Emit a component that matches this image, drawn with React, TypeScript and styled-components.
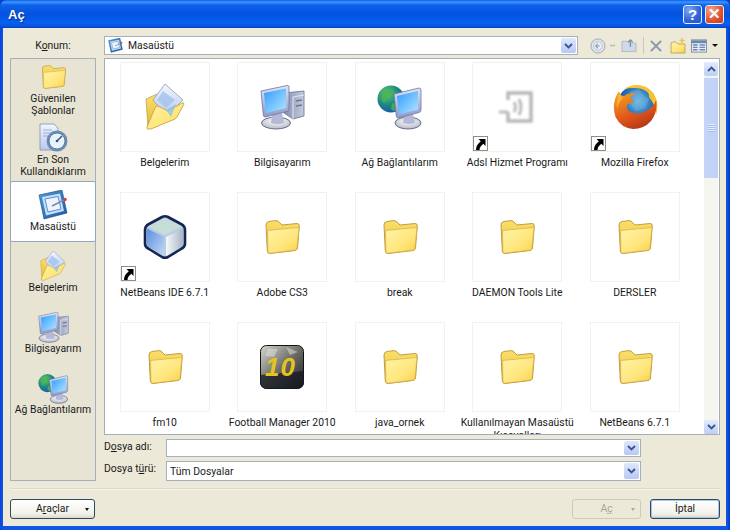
import React from "react";
import styled, { createGlobalStyle } from "styled-components";

const Global = createGlobalStyle`
  html, body { margin: 0; padding: 0; background: #0a3fd0; }
  * { box-sizing: border-box; }
  u { text-underline-offset: 1px; }
`;
const FONT = `Roboto, "Liberation Sans", Arial, sans-serif`;
const TITLE_FONT = `"Liberation Sans", Arial, sans-serif`;

const Window = styled.div`
  width: 730px; height: 530px; display: flex; flex-direction: column; overflow: hidden;
  padding: 0 4px 4px 3px; font: 10.4px/13px ${FONT}; color: #1a1a1a;
  background: linear-gradient(90deg, #0a45d8 0, #0f55e8 3px, #0f55e8 727px, #0636b8 730px);
  border-radius: 7px 7px 0 0;
`;
const TitleBar = styled.div`
  height: 28px; flex: none; margin: 0 -4px 0 -3px; padding: 0 6px 0 8px;
  display: flex; align-items: center; justify-content: space-between;
  background: linear-gradient(180deg, #0a5fe8 0, #3f95ff 2px, #0f62ea 5px, #0452e0 14px, #0560ee 23px, #0a55e0 26px, #0440c0 28px);
`;
const Title = styled.div`
  font: bold 13px ${TITLE_FONT}; color: #fff; text-shadow: 1px 1px 1px #0a2a90;
`;
const TitleButtons = styled.div` display: flex; gap: 3px; `;
const CapButton = styled.div<{ $close?: boolean }>`
  width: 19px; height: 19px; border: 1px solid #e8eefc; border-radius: 3px; display: flex;
  align-items: center; justify-content: center; color: #fff;
  font: bold 15px ${TITLE_FONT};
  background: ${(p) => p.$close
    ? "radial-gradient(circle at 30% 25%, #f4a58c, #e0512c 60%, #c8361a)"
    : "radial-gradient(circle at 30% 25%, #7fa8f5, #2f62d8 60%, #2a55c8)"};
`;
const Body = styled.div`
  flex: 1; min-height: 0; background: #ece9d8; padding: 8px 6px 0 7px;
  display: flex; flex-direction: column;
`;
const LocationRow = styled.div` height: 19px; display: flex; align-items: center; flex: none; `;
const LocationLabel = styled.div` width: 94px; flex: none; padding-right: 8px; text-align: center; `;
const Combo = styled.div<{ $w: number; $h: number }>`
  width: ${(p) => p.$w}px; height: ${(p) => p.$h}px; flex: none; background: #fff;
  border: 1px solid #a3b0bd; display: flex; align-items: center; padding: 0 1px 0 2px;
`;
const ComboText = styled.div` flex: 1; padding-left: 1px; display: flex; align-items: center; gap: 5px; `;
const DropButton = styled.div`
  width: 15px; height: calc(100% - 2px); border-radius: 2px; display: flex; align-items: center; justify-content: center;
  background: linear-gradient(180deg, #dfe8fc, #b5c9f4);
`;
const Tools = styled.div` display: flex; align-items: center; margin-left: 12px; height: 19px; flex: none; `;
const Tool = styled.span<{ $ml?: number }>` display: flex; flex: none; margin-left: ${(p) => p.$ml ?? 0}px; `;
const ToolSep = styled.div` width: 1px; height: 17px; flex: none; background: #c8c8ba; margin-left: 6px; `;
const Content = styled.div` flex: none; height: 423px; margin-top: 3px; display: flex; gap: 8px; `;
const Sidebar = styled.div`
  width: 86px; flex: none; border: 1px solid #a5b0ba; background: #e8e4d4; display: flex; flex-direction: column;
`;
const Place = styled.div<{ $active?: boolean }>`
  height: 61px; flex: none; display: flex; flex-direction: column; align-items: center; justify-content: center;
  text-align: center; line-height: 12px; white-space: pre-line; gap: 1px;
  ${(p) => p.$active && "background: #fff; border: 1px solid #8fa7bf; border-radius: 2px; margin: 0 -1px;"}
`;
const PlaceIcon = styled.div` height: 30px; flex: none; display: flex; align-items: center; justify-content: center; `;
const Main = styled.div` flex: 1; min-width: 0; display: flex; flex-direction: column; `;
const FileList = styled.div`
  height: 377px; flex: none; background: #fff; border: 1px solid #a3aeb8; display: flex; overflow: hidden;
`;
const Grid = styled.div`
  flex: 1; min-width: 0; height: 100%; overflow: hidden; padding: 3px 0 0 1px; display: grid;
  grid-template-columns: repeat(5, 117.5px); grid-auto-rows: 130px; align-content: start;
`;
const Cell = styled.div` display: flex; flex-direction: column; align-items: center; `;
const Thumb = styled.div`
  width: 90px; height: 90px; flex: none; position: relative; border: 1px solid #f3f1e8;
  display: flex; align-items: center; justify-content: center; margin-bottom: 3px;
`;
const Name = styled.div` width: 116px; text-align: center; line-height: 13px; padding-top: 1px; `;
const Badge = styled.div`
  position: absolute; left: 0; bottom: 0; width: 15px; height: 15px; background: #fff;
  border: 1px solid #8d8d8d; display: flex; align-items: center; justify-content: center;
`;
const ScrollBar = styled.div`
  width: 14px; flex: none; margin: 3px 1px 0 0; display: flex; flex-direction: column; background: #f6f6f0;
`;
const ScrollBtn = styled.div`
  height: 14px; flex: none; background: linear-gradient(180deg, #e2ebfd, #bcd0f6); border-radius: 2px;
  display: flex; align-items: center; justify-content: center;
`;
const ScrollThumb = styled.div`
  height: 101px; flex: none; margin-top: 1px; background: linear-gradient(90deg, #c6d6f8, #bed0f6);
  border-top: 1px solid #eef3fd; display: flex; align-items: center; justify-content: center;
`;
const Grip = styled.div` width: 7px; height: 8px; background: repeating-linear-gradient(180deg, #e6edfc 0 1px, #a9bdea 1px 2px); `;
const ScrollTrack = styled.div` flex: 1; `;
const FormRow = styled.div<{ $mt: number }>` display: flex; align-items: center; margin-top: ${(p) => p.$mt}px; flex: none; `;
const FormLabel = styled.div<{ $up: number }>` width: 62px; flex: none; margin-bottom: ${(p) => p.$up * 2}px; `;
const Separator = styled.div` height: 2px; flex: none; margin: 7px -1px 0 0; border-top: 1px solid #dcd9c8; border-bottom: 1px solid #f6f4ea; `;
const ButtonRow = styled.div` flex: none; display: flex; align-items: center; margin-top: 9px; gap: 9px; `;
const Btn = styled.div<{ $w: number; $disabled?: boolean; $focus?: boolean }>`
  width: ${(p) => p.$w}px; height: 20px; border-radius: 3px; flex: none; display: flex; align-items: center; justify-content: center;
  position: relative; padding-bottom: 1px;
  border: 1px solid ${(p) => (p.$disabled ? "#cdcabb" : "#2d4a64")};
  color: ${(p) => (p.$disabled ? "#aaa899" : "#1a1a1a")};
  background: ${(p) => (p.$disabled ? "#ece9d8" : "linear-gradient(180deg, #fff, #f3f2ea 75%, #dcd8cb)")};
  ${(p) => p.$focus && "box-shadow: inset 0 0 0 1px #a9c4ec;"}
`;
const Caret = styled.span<{ $c: string }>`
  position: absolute; right: 5px; top: 8px; width: 0; height: 0; border: 2.5px solid transparent; border-top: 3px solid ${(p) => p.$c}; border-bottom: 0;
`;
const Spacer = styled.div` flex: 1; `;
const HiddenDefs = styled.svg` position: absolute; width: 0; height: 0; `;
const Blurred = styled.svg` filter: blur(0.8px); `;

const Defs = () => (
  <HiddenDefs aria-hidden="true">
    <defs>
      <linearGradient id="fy" x1="0" y1="0" x2="1" y2="1"><stop offset="0" stopColor="#fff4a8" /><stop offset="0.6" stopColor="#ffe67c" /><stop offset="1" stopColor="#f8d04c" /></linearGradient>
      <linearGradient id="fb" x1="0" y1="0" x2="0" y2="1"><stop offset="0" stopColor="#fbe06a" /><stop offset="1" stopColor="#e6b83a" /></linearGradient>
      <linearGradient id="sc" x1="0" y1="0" x2="1" y2="1"><stop offset="0" stopColor="#2f9bff" /><stop offset="1" stopColor="#b5e6ff" /></linearGradient>
      <linearGradient id="fr" x1="0" y1="0" x2="0" y2="1"><stop offset="0" stopColor="#dde3f6" /><stop offset="1" stopColor="#8e9ac8" /></linearGradient>
      <linearGradient id="tw" x1="0" y1="0" x2="1" y2="0"><stop offset="0" stopColor="#8490b0" /><stop offset="1" stopColor="#c4cbe0" /></linearGradient>
      <radialGradient id="bs" cx="0.5" cy="0.35" r="0.7"><stop offset="0" stopColor="#ffffff" /><stop offset="1" stopColor="#b0b4c4" /></radialGradient>
      <radialGradient id="gl" cx="0.35" cy="0.3" r="0.8"><stop offset="0" stopColor="#5fd069" /><stop offset="0.5" stopColor="#1f8a80" /><stop offset="1" stopColor="#1550b0" /></radialGradient>
      <radialGradient id="ffb" cx="0.55" cy="0.4" r="0.6"><stop offset="0" stopColor="#7cc4e8" /><stop offset="0.7" stopColor="#1e6ab0" /><stop offset="1" stopColor="#123f86" /></radialGradient>
      <linearGradient id="ffo" x1="0.2" y1="0" x2="0.7" y2="1"><stop offset="0" stopColor="#f6a020" /><stop offset="0.6" stopColor="#e0551a" /><stop offset="1" stopColor="#b03418" /></linearGradient>
      <linearGradient id="nl" x1="0" y1="0" x2="1" y2="1"><stop offset="0" stopColor="#5b8fe0" /><stop offset="1" stopColor="#c4d8f4" /></linearGradient>
      <linearGradient id="nr" x1="0" y1="0" x2="1" y2="0"><stop offset="0" stopColor="#f6f9fb" /><stop offset="1" stopColor="#a8b4c4" /></linearGradient>
      <linearGradient id="fm" x1="0" y1="0" x2="1" y2="1"><stop offset="0" stopColor="#d8d8d0" /><stop offset="0.5" stopColor="#6c6c68" /><stop offset="1" stopColor="#1c1c1c" /></linearGradient>
      <linearGradient id="dk" x1="0" y1="0" x2="1" y2="1"><stop offset="0" stopColor="#4a9ad8" /><stop offset="1" stopColor="#1a5aa0" /></linearGradient>
      <linearGradient id="dc" x1="0" y1="0" x2="0" y2="1"><stop offset="0" stopColor="#f2f6fe" /><stop offset="1" stopColor="#b8c8ee" /></linearGradient>
    </defs>
  </HiddenDefs>
);

const Folder = ({ w = 36, h = 34 }: { w?: number; h?: number }) => (
  <svg width={w} height={h} viewBox="0 0 36 34">
    <path d="M2 5Q2 2 5 1.500L12 .6Q14 .5 16 3L18 5L33 3.500Q35.500 3.500 35.300 6L33.500 28Q33.300 30 31 30.500L6 33.500Q3.500 33.500 3.300 31Z" fill="url(#fb)" stroke="#b8943a" strokeWidth=".9" />
    <path d="M3.600 10.500L33.800 7.500Q35 7.500 34.800 9L33 28.500Q32.900 29.800 31 30.200L6 33.200Q4 33.200 3.900 31.500Z" fill="url(#fy)" stroke="#d0a640" strokeWidth=".6" />
  </svg>
);
const DocFolder = ({ s = 40 }: { s?: number }) => (
  <svg width={s} height={s * 1.15} viewBox="0 0 40 46">
    <path d="M1 15L12 10L15 12L15 32L3 44Z" fill="url(#fb)" stroke="#b8983e" strokeWidth=".7" />
    <path d="M20 0L38 16L22 32L8 16Z" fill="url(#dc)" stroke="#8a9cc0" strokeWidth=".8" />
    <path d="M18 7L30 16L21 24L12 16Z" fill="#9fc0ee" opacity=".75" />
    <path d="M3 45Q1.500 45 2 43L10 24Q11 22 13 22L23 27L37 19Q39.500 18 38.800 20.500L32 33Q31 34.500 30 35L6 45Z" fill="url(#fy)" stroke="#c09a3e" strokeWidth=".8" />
    <path d="M21 26L31 20L26 33Z" fill="#8fc0e8" opacity=".8" />
  </svg>
);
const Computer = ({ s = 45 }: { s?: number }) => (
  <svg width={s} height={s} viewBox="0 0 45 45">
    <path d="M24 8L44 6L44 31L33 34L24 28Z" fill="url(#tw)" stroke="#66708c" strokeWidth=".8" />
    <path d="M33 12L44 10M33 12L33 34" stroke="#e3e7f2" strokeWidth="1" fill="none" />
    <path d="M36 16L42 15M36 21L42 20" stroke="#6a7696" strokeWidth="1.500" />
    <ellipse cx="16" cy="38" rx="14.500" ry="6" fill="url(#bs)" stroke="#59627c" strokeWidth=".9" />
    <path d="M12 30L22 28L24 38Q17 40 11 38Z" fill="#b5b8d6" />
    <path d="M1 6L27 0.500Q29 .3 29 2L29 24Q29 26 27 26.500L5 32Q3.500 32 3.300 30Z" fill="url(#fr)" stroke="#6c76a0" strokeWidth=".8" />
    <path d="M4 8L26 3.500L26 23L6 28Z" fill="url(#sc)" />
  </svg>
);
const Network = ({ s = 46 }: { s?: number }) => (
  <svg width={s} height={s} viewBox="0 0 46 46">
    <circle cx="14" cy="15" r="13.500" fill="url(#gl)" />
    <path d="M6 8Q12 4 17 8Q15 13 10 12Q10 18 7 19Q3 15 6 8ZM15 19Q21 19 20 25Q17 29 14 25Z" fill="#4fb04f" opacity=".8" />
    <ellipse cx="31" cy="39" rx="13" ry="6" fill="url(#bs)" stroke="#59627c" strokeWidth=".9" />
    <path d="M27 32L36 30L38 39Q32 41 26 39Z" fill="#b5b8d6" />
    <path d="M17 10L42 4Q44 4 44 6L44 26Q44 28 42 28.500L21 34Q19.500 34 19.300 32Z" fill="url(#fr)" stroke="#6c76a0" strokeWidth=".8" />
    <path d="M20 12L41 7L41 25.500L22 30.500Z" fill="url(#sc)" />
  </svg>
);
const Adsl = () => (
  <Blurred width="38" height="38" viewBox="0 0 38 38">
    <path d="M10 12V5H33V33H10V24" fill="none" stroke="#b8b8b8" strokeWidth="3.500" />
    <path d="M1 24H10M16 14Q19 19 16 24M21 11Q25 19 21 27" fill="none" stroke="#bcbcbc" strokeWidth="3" />
  </Blurred>
);
const Firefox = () => (
  <svg width="46" height="46" viewBox="0 0 46 46">
    <circle cx="24" cy="21" r="19" fill="url(#ffb)" />
    <path d="M18 8L27 5L32 12L37 15L33 24L24 27L16 17Z" fill="#6ab0de" opacity=".5" />
    <path d="M12 5Q23 -2 34 3Q42 7 45 17Q46 25 44 31Q43 20 37 13Q38 8 30 5Q22 3 12 5Z" fill="#f6c232" />
    <path d="M7 7Q8 12 12 12Q17 8 25 10Q19 11 18 14Q23 16 21 19Q17 18 15 21Q14 27 21 29Q29 31 36 26Q42 22 44 16Q46 28 39 37Q32 45 21 45Q9 44 3.500 33Q-1 19 7 7Z" fill="url(#ffo)" />
    <path d="M7 9Q4 17 5 25Q7 17 11 14Z" fill="#f8c040" opacity=".7" />
  </svg>
);
const NetBeans = () => (
  <svg width="44" height="46" viewBox="0 0 44 46">
    <path d="M19 3Q22 1.500 25 3L38 10Q42 12 42 16V30Q42 33 38 35L25 43Q22 44.500 19 43L6 35Q2 33 2 30V16Q2 12 6 10Z" fill="#b8cde2" stroke="#172552" strokeWidth="2.600" strokeLinejoin="round" />
    <path d="M22 4L39 12.500L22 21L5 12.500Z" fill="#c6dcd6" />
    <path d="M4 14.500L21 23V42L6 33Q4 32 4 30Z" fill="url(#nl)" />
    <path d="M23 23L40 14.500V30Q40 32 38 33L23 42Z" fill="url(#nr)" />
  </svg>
);
const FmNumber = styled.text` font: italic bold 26px ${TITLE_FONT}; fill: #e6c41e; letter-spacing: 1px; `;
const Fm10 = () => (
  <svg width="44" height="44" viewBox="0 0 44 44">
    <rect width="43" height="43" x=".5" y=".5" rx="6" fill="url(#fm)" stroke="#111" />
    <path d="M0 30L44 26V37Q44 44 36 44H8Q0 44 0 37Z" fill="#151a22" opacity=".75" />
    <path d="M8 4L18 4L14 12L5 11ZM26 2L38 7L30 10Z" fill="#e4e4dc" opacity=".5" />
    <FmNumber x="5" y="31">10</FmNumber>
  </svg>
);
const Desktop = ({ s = 30 }: { s?: number }) => (
  <svg width={s} height={s} viewBox="0 0 30 30">
    <path d="M1 5L24 0L29 23L6 29Z" fill="url(#dk)" stroke="#1a4a88" strokeWidth=".6" />
    <path d="M4 7L22 3.500L26 21L8 25.500Z" fill="#c8dcf8" />
    <path d="M7 9L20 6.500L23 19L10 22Z" fill="#eef4fe" stroke="#3a78c0" strokeWidth=".8" />
    <path d="M14 16L26 10" stroke="#7d8ca8" strokeWidth="1.600" />
    <circle cx="27" cy="9.500" r="1.800" fill="#d84040" />
  </svg>
);
const Recent = () => (
  <svg width="30" height="30" viewBox="0 0 30 30">
    <path d="M2 1H16L20 5V27H2Z" fill="url(#dc)" stroke="#8090b0" strokeWidth=".8" />
    <path d="M5 7H14M5 10H14M5 13H10" stroke="#9ab0d8" strokeWidth="1" />
    <circle cx="19" cy="18" r="10.500" fill="#6f8db0" />
    <circle cx="19" cy="18" r="8" fill="#e8f2fa" stroke="#3f6a98" strokeWidth=".8" />
    <path d="M19 18L24 13" stroke="#34507a" strokeWidth="1.500" />
    <circle cx="19" cy="18" r="1.300" fill="#34507a" />
  </svg>
);
const Shortcut = () => (
  <svg width="11" height="12" viewBox="0 0 11 12">
    <path d="M10.500 1V8L8.300 5.800L6 8Q4.500 9.500 4.500 12H1Q1 7.500 4 5L5.800 3.300L3.500 1Z" fill="#000" />
  </svg>
);
const Chevron = ({ d = "down" }: { d?: "down" | "up" }) => (
  <svg width="9" height="6" viewBox="0 0 9 6">
    <path d={d === "down" ? "M1 1L4.500 4.500L8 1" : "M1 5L4.500 1.500L8 5"} fill="none" stroke="#3c5590" strokeWidth="1.900" />
  </svg>
);
const ToolBack = () => (
  <svg width="16" height="16" viewBox="0 0 17 17">
    <circle cx="8.500" cy="8.500" r="7.500" fill="#dfe3ea" stroke="#9aa8bc" />
    <circle cx="8.500" cy="8.500" r="4.500" fill="#eef1f5" stroke="#b8c2d0" />
    <path d="M10.500 8.500H6.500M8.500 6L6 8.500L8.500 11" fill="none" stroke="#8a9ab0" strokeWidth="1.200" />
  </svg>
);
const ToolDash = () => <svg width="5" height="3" viewBox="0 0 5 3"><path d="M0 1.500H5" stroke="#b8bcc4" strokeWidth="1.500" /></svg>;
const ToolUp = () => (
  <svg width="16" height="15" viewBox="0 0 17 15">
    <path d="M1 3H7L9 5H16V14H1Z" fill="#cfdae6" stroke="#a4b2c2" strokeWidth=".8" />
    <path d="M10 9V2M7.500 4L10 1.500L12.500 4" stroke="#7e92a8" fill="none" strokeWidth="1.400" />
  </svg>
);
const ToolX = () => <svg width="14" height="14" viewBox="0 0 15 15"><path d="M2 2L13 13M13 2L2 13" stroke="#8b98a8" strokeWidth="2.200" /></svg>;
const ToolNew = () => (
  <svg width="16" height="16" viewBox="0 0 16 16">
    <path d="M1 6Q1 4 3 4H6L8 6H15V15H1Z" fill="url(#fy)" stroke="#a8904a" strokeWidth=".7" />
    <path d="M12 0V5M9.500 2.500H14.500" stroke="#e8c838" strokeWidth="1.400" />
  </svg>
);
const ToolViews = () => (
  <svg width="16" height="14" viewBox="0 0 17 14">
    <rect x=".5" y=".5" width="16" height="13" fill="#e8eef8" stroke="#7a8fae" />
    <rect x="1" y="1" width="15" height="3" fill="#6d86ae" />
    <path d="M2 6H7M2 8.500H7M2 11H7M9 6H15M9 8.500H15M9 11H15" stroke="#7088ae" strokeWidth="1.500" />
  </svg>
);
const ToolCaret = styled.span` width: 0; height: 0; flex: none; margin-left: 5px; border: 3px solid transparent; border-top: 3px solid #111; border-bottom: 0; `;

const FILES: { name: string; icon: React.ReactNode; link?: boolean }[] = [
  { name: "Belgelerim", icon: <DocFolder /> },
  { name: "Bilgisayarım", icon: <Computer /> },
  { name: "Ağ Bağlantılarım", icon: <Network /> },
  { name: "Adsl Hizmet Programı", icon: <Adsl />, link: true },
  { name: "Mozilla Firefox", icon: <Firefox />, link: true },
  { name: "NetBeans IDE 6.7.1", icon: <NetBeans />, link: true },
  { name: "Adobe CS3", icon: <Folder /> },
  { name: "break", icon: <Folder /> },
  { name: "DAEMON Tools Lite", icon: <Folder /> },
  { name: "DERSLER", icon: <Folder /> },
  { name: "fm10", icon: <Folder /> },
  { name: "Football Manager 2010", icon: <Fm10 /> },
  { name: "java_ornek", icon: <Folder /> },
  { name: "Kullanılmayan Masaüstü Kısayolları", icon: <Folder /> },
  { name: "NetBeans 6.7.1", icon: <Folder /> },
];
const PLACES: { name: string; icon: React.ReactNode; active?: boolean }[] = [
  { name: "Güvenilen\nŞablonlar", icon: <Folder w={25} h={24} /> },
  { name: "En Son\nKullandıklarım", icon: <Recent /> },
  { name: "Masaüstü", icon: <Desktop />, active: true },
  { name: "Belgelerim", icon: <DocFolder s={26} /> },
  { name: "Bilgisayarım", icon: <Computer s={31} /> },
  { name: "Ağ Bağlantılarım", icon: <Network s={31} /> },
];

export default function App() {
  return (
    <Window>
      <Global />
      <Defs />
      <TitleBar>
        <Title>Aç</Title>
        <TitleButtons>
          <CapButton>?</CapButton>
          <CapButton $close>✕</CapButton>
        </TitleButtons>
      </TitleBar>
      <Body>
        <LocationRow>
          <LocationLabel>K<u>o</u>num:</LocationLabel>
          <Combo $w={474} $h={19}>
            <ComboText><Desktop s={15} />Masaüstü</ComboText>
            <DropButton><Chevron /></DropButton>
          </Combo>
          <Tools>
            <Tool><ToolBack /></Tool>
            <Tool $ml={4}><ToolDash /></Tool>
            <Tool $ml={6}><ToolUp /></Tool>
            <ToolSep />
            <Tool $ml={5}><ToolX /></Tool>
            <Tool $ml={7}><ToolNew /></Tool>
            <Tool $ml={5}><ToolViews /></Tool>
            <ToolCaret />
          </Tools>
        </LocationRow>
        <Content>
          <Sidebar>
            {PLACES.map((p) => (
              <Place key={p.name} $active={p.active}>
                <PlaceIcon>{p.icon}</PlaceIcon>
                {p.name}
              </Place>
            ))}
          </Sidebar>
          <Main>
            <FileList>
              <Grid>
                {FILES.map((f) => (
                  <Cell key={f.name}>
                    <Thumb>
                      {f.icon}
                      {f.link && <Badge><Shortcut /></Badge>}
                    </Thumb>
                    <Name>{f.name}</Name>
                  </Cell>
                ))}
              </Grid>
              <ScrollBar>
                <ScrollBtn><Chevron d="up" /></ScrollBtn>
                <ScrollThumb><Grip /></ScrollThumb>
                <ScrollTrack />
                <ScrollBtn><Chevron /></ScrollBtn>
              </ScrollBar>
            </FileList>
            <FormRow $mt={4}>
              <FormLabel $up={2}>D<u>o</u>sya adı:</FormLabel>
              <Combo $w={475} $h={18}>
                <ComboText />
                <DropButton><Chevron /></DropButton>
              </Combo>
            </FormRow>
            <FormRow $mt={4}>
              <FormLabel $up={3}>Dosya t<u>ü</u>rü:</FormLabel>
              <Combo $w={475} $h={20}>
                <ComboText>Tüm Dosyalar</ComboText>
                <DropButton><Chevron /></DropButton>
              </Combo>
            </FormRow>
          </Main>
        </Content>
        <Separator />
        <ButtonRow>
          <Btn $w={85}>A<u>r</u>açlar<Caret $c="#111" /></Btn>
          <Spacer />
          <Btn $w={69} $disabled>A<u>ç</u><Caret $c="#aaa899" /></Btn>
          <Btn $w={70} $focus>İptal</Btn>
        </ButtonRow>
      </Body>
    </Window>
  );
}
